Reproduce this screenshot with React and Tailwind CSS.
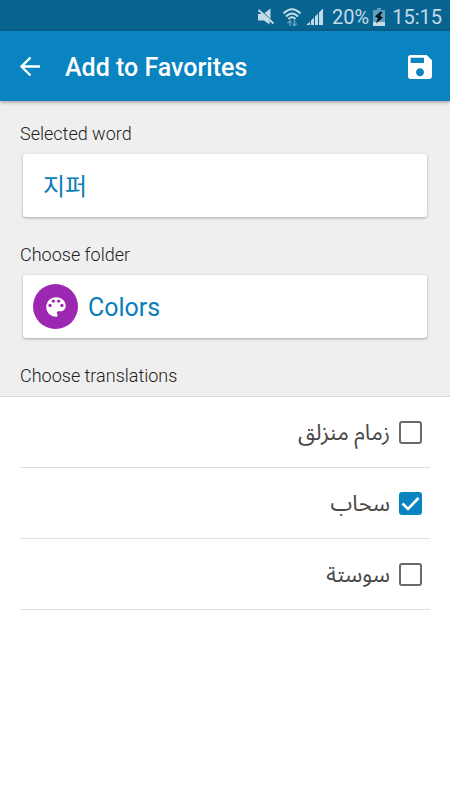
import { useState } from "react";
import { MdSave } from "react-icons/md";

const initialTranslations = [
  { id: 1, text: "زمام منزلق", checked: false },
  { id: 2, text: "سحاب", checked: true },
  { id: 3, text: "سوستة", checked: false },
];

function StatusBar() {
  return (
    <div className="flex h-[31px] items-center justify-end bg-[#07638f] pt-[2px] pr-2 text-xl text-[#c3dbe7]">
      {/* Muted speaker */}
      <svg className="mr-[7px] h-[18px] w-[18px]" viewBox="0 0 18 18" fill="currentColor">
        <path d="M1 6h4.500L12.500 13V16.500L7 12.500H1z" />
        <path d="M7.500 5L13.500 0.500V11z" />
        <path d="M1.500 2L16.500 15.500" stroke="currentColor" strokeWidth="2" />
      </svg>
      {/* Wifi */}
      <svg className="mr-1 h-5 w-5" viewBox="0 0 20 20" fill="none" stroke="currentColor" strokeWidth="2">
        <path d="M1.500 6.500Q10 -2 18.500 6.500" />
        <path d="M4 9.500Q10 3.500 16 9.500" />
        <path d="M6.500 12Q10 8.500 13.500 12" />
        <g stroke="#5f9dbb" strokeWidth="1.500">
          <path d="M8 19v-5M5.500 16.200L8 13.800L9.500 15.500M12.500 13v5.500M10.500 16.500l2 2.200l2.200-2.200" />
        </g>
      </svg>
      {/* Signal strength */}
      <svg className="mr-2 h-[18px] w-[18px]" viewBox="0 0 18 18" fill="currentColor">
        <path d="M0.500 17L4 13.500V17zM5 17V12.500L8 9.500V17zM9 17V8.500L12 5.500V17zM13 17V4.500L17 0.500V17z" />
      </svg>
      <span>20%</span>
      {/* Battery */}
      <svg className="mr-[7px] ml-1 h-[18px] w-3" viewBox="0 0 12 18">
        <path d="M4 0h4v2h4v16H0V2h4z" fill="#5f9dbb" />
        <path d="M0 14h12v4H0z" fill="#c3dbe7" />
        <path d="M7.500 3.500L2 8.500L5 10L3 15.500L10 9.500L7 8L9.500 4z" fill="#05141d" />
      </svg>
      <span>15:15</span>
    </div>
  );
}

function TranslationRow({ item, onToggle }) {
  return (
    <li className="border-b border-[#dfdfdf]">
      <label className="flex h-[70px] items-center gap-[9px] pr-2 text-[22px] text-[#484848]">
        <span className="grid">
          <input
            type="checkbox"
            checked={item.checked}
            onChange={() => onToggle(item.id)}
            className="peer col-start-1 row-start-1 h-[23px] w-[23px] appearance-none rounded-[3px] border-2 border-[#6a6a6a] checked:border-[#0a84c0] checked:bg-[#0a84c0]"
          />
          <svg
            className="pointer-events-none invisible col-start-1 row-start-1 h-[23px] w-[23px] peer-checked:visible"
            viewBox="0 0 23 23"
            fill="none"
            stroke="white"
            strokeWidth="2.600"
          >
            <path d="M3.500 11.500L9 17L19.500 6" />
          </svg>
        </span>
        <span lang="ar">{item.text}</span>
      </label>
    </li>
  );
}

export default function App() {
  const [word, setWord] = useState("지퍼");
  const [translations, setTranslations] = useState(initialTranslations);

  const handleToggle = (id) => {
    setTranslations(
      translations.map((t) => (t.id === id ? { ...t, checked: !t.checked } : t))
    );
  };

  return (
    <div className="min-h-screen bg-white font-[Roboto,'Noto_Sans_Arabic','Noto_Sans','Noto_Sans_CJK_KR',sans-serif]">
      <StatusBar />

      {/* Header */}
      <header className="relative flex h-[70px] items-center bg-[#0a84c0] pt-[2px] pr-[14px] pl-[18px] text-white shadow-[0_1px_4px_rgba(0,0,0,0.4)]">
        <button type="button" aria-label="Back">
          <svg className="h-6 w-6" viewBox="0 0 24 24" fill="none" stroke="currentColor" strokeWidth="2.400">
            <path d="M22 11.500H3.500M12.500 2.500L3.500 11.500L12.500 20.500" />
          </svg>
        </button>
        <h1 className="ml-[23px] flex-1 pt-[2px] text-[25px] font-medium">Add to Favorites</h1>
        <button type="button" aria-label="Save">
          <MdSave className="h-8 w-8" />
        </button>
      </header>

      {/* Word and folder */}
      <section className="border-b border-[#d5dadd] bg-[#efefef] px-5 pt-5">
        <label htmlFor="word" className="block h-[33px] text-lg leading-[26px] font-light text-[#222222]">
          Selected word
        </label>
        <div className="mx-[3px] flex h-[63px] rounded-[3px] bg-white shadow-[0_1px_3px_rgba(0,0,0,0.3)]">
          <input
            id="word"
            value={word}
            onChange={(e) => setWord(e.target.value)}
            className="w-full px-5 pt-[2px] text-2xl text-[#0a7dba] outline-none"
          />
        </div>

        <label htmlFor="folder" className="mt-[25px] block h-[33px] text-lg leading-[26px] font-light text-[#222222]">
          Choose folder
        </label>
        <div className="mx-[3px] flex h-[63px] rounded-[3px] bg-white shadow-[0_1px_3px_rgba(0,0,0,0.3)]">
          <button id="folder" type="button" className="flex w-full items-center gap-[10px] px-[10px] text-[25px] text-[#0a7dba]">
            <span className="flex h-[45px] w-[45px] items-center justify-center rounded-full bg-[#9c27b0] text-white">
              <svg className="h-[26px] w-[26px]" viewBox="0 0 24 24" fill="currentColor">
                <path d="M12 3c-4.970 0-9 4.030-9 9s4.030 9 9 9c.83 0 1.500-.67 1.500-1.500 0-.39-.15-.74-.39-1.010-.23-.26-.38-.61-.38-.99 0-.83.67-1.500 1.500-1.500H16c2.760 0 5-2.240 5-5 0-4.420-4.030-8-9-8zm-5.500 9c-.83 0-1.500-.67-1.500-1.500S5.670 9 6.500 9 8 9.670 8 10.500 7.330 12 6.500 12zm3-4C8.670 8 8 7.330 8 6.500S8.670 5 9.500 5s1.500.67 1.500 1.500S10.330 8 9.500 8zm5 0c-.83 0-1.500-.67-1.500-1.500S13.670 5 14.500 5s1.500.67 1.500 1.500S15.330 8 14.500 8zm3 4c-.83 0-1.500-.67-1.500-1.500S16.670 9 17.500 9s1.500.67 1.500 1.500-.67 1.500-1.500 1.500z" />
              </svg>
            </span>
            <span className="pt-[2px]">Colors</span>
          </button>
        </div>

        <h2 className="mt-[25px] h-[33px] text-lg leading-[26px] font-light text-[#222222]">Choose translations</h2>
      </section>

      {/* Translations */}
      <ul dir="rtl" className="px-5">
        {translations.map((item) => (
          <TranslationRow key={item.id} item={item} onToggle={handleToggle} />
        ))}
      </ul>
    </div>
  );
}
